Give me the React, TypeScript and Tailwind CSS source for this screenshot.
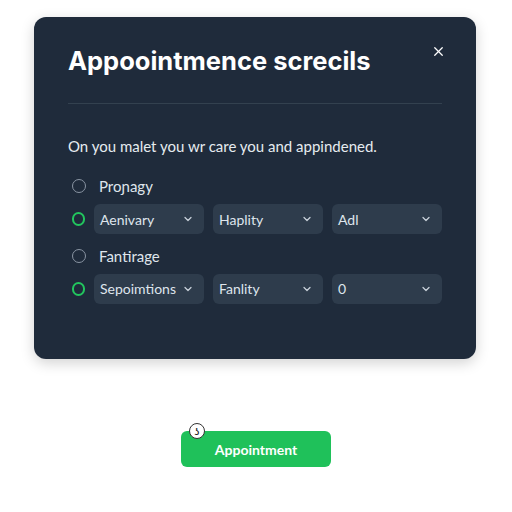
import { ChevronDown, X } from "lucide-react";

function Select({ label }: { label: string }) {
  return (
    <div className="flex h-[30px] w-[110px] items-center justify-between rounded-md bg-[#2e3c4c] pl-[6px] pr-[10px] text-[14px] text-[#dfe5ec]">
      <span>{label}</span>
      <ChevronDown size={12} strokeWidth={2.5} className="text-[#c8d0da]" />
    </div>
  );
}

function Radio({ active }: { active?: boolean }) {
  return (
    <div
      className={
        active
          ? "h-[14px] w-[14px] rounded-full border-2 border-[#22c55e]"
          : "h-[14px] w-[14px] rounded-full border-[1.5px] border-[#8a95a3]"
      }
    />
  );
}

export default function App() {
  return (
    <div
      className="flex h-[512px] w-[512px] flex-col items-center bg-white"
      style={{ fontFamily: "Lato, 'Noto Sans', sans-serif" }}
    >
      {/* Modal */}
      <div className="mt-[17px] ml-[-2px] h-[342px] w-[442px] rounded-xl bg-[#1f2b3b] px-[34px] shadow-[0_4px_14px_rgba(0,0,0,0.18)]">
        <div className="flex items-start justify-between pt-[28px]">
          <h1
            className="text-[25.5px] font-bold leading-[32px] text-white"
            style={{ fontFamily: "Inter, 'Noto Sans', sans-serif" }}
          >
            Appoointmence screcils
          </h1>
          <X size={15} strokeWidth={2} className="mt-[-1px] mr-[-4px] text-white" />
        </div>

        <div className="mt-[26px] h-px w-full bg-[#33414f]" />

        <p className="mt-[31px] text-[15px] text-[#e6ebf0]">
          On you malet you wr care you and appindened.
        </p>

        <div className="mt-[17px] flex flex-col">
          <div className="flex items-center gap-[13px] pl-[4px]">
            <Radio />
            <span className="text-[15px] text-[#dfe5ec]">Proɲagy</span>
          </div>
          <div className="mt-[7px] flex items-center gap-[8px] pl-[4px]">
            <Radio active />
            <div className="flex gap-[9px] pl-[1px]">
              <Select label="Aenivary" />
              <Select label="Haplity" />
              <Select label="Adl" />
            </div>
          </div>

          <div className="mt-[11px] flex items-center gap-[13px] pl-[4px]">
            <Radio />
            <span className="text-[15px] text-[#dfe5ec]">Fantirage</span>
          </div>
          <div className="mt-[6px] flex items-center gap-[8px] pl-[4px]">
            <Radio active />
            <div className="flex gap-[9px] pl-[1px]">
              <Select label="Sepoimtions" />
              <Select label="Fanlity" />
              <Select label="0" />
            </div>
          </div>
        </div>
      </div>

      {/* Action */}
      <div className="relative mt-[72px]">
        <button className="flex h-[36px] w-[150px] items-center justify-center rounded-md bg-[#1fc15a] text-[14px] font-bold text-white">
          Appointment
        </button>
        <span className="absolute left-[8px] top-[-8px] flex h-[16px] w-[16px] items-center justify-center rounded-full border border-[#333] bg-white text-[9px] font-bold leading-none text-[#222]">
          ʖ
        </span>
      </div>
    </div>
  );
}
